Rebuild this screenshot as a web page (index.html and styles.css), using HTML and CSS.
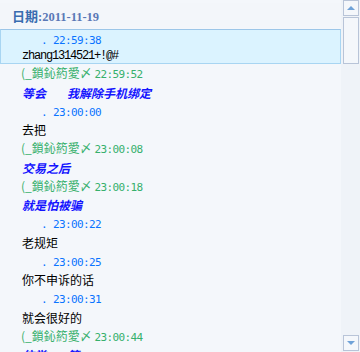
FILE: index.html
```html
<!DOCTYPE html>
<html lang="zh-CN">
<head>
<meta charset="utf-8">
<meta name="viewport" content="width=device-width, initial-scale=1.0">
<link rel="stylesheet" href="styles.css">
<title>聊天记录</title>
</head>
<body>
  <div class="window">
    <div class="log">
      <div class="date"><b>日期</b><span class="day">:2011-11-19</span></div>

      <div class="msg self selected">
        <div class="time"><span class="clock">. 22:59:38</span></div>
        <div class="text mono">zhang1314521+!@#</div>
      </div>

      <div class="msg">
        <div class="time peer">(_鎖鈊箹愛〆 <span class="clock">22:59:52</span></div>
        <div class="text loud">等会<span class="gap"></span>我解除手机绑定</div>
      </div>

      <div class="msg self">
        <div class="time"><span class="clock">. 23:00:00</span></div>
        <div class="text">去把</div>
      </div>

      <div class="msg">
        <div class="time peer">(_鎖鈊箹愛〆 <span class="clock">23:00:08</span></div>
        <div class="text loud">交易之后</div>
      </div>

      <div class="msg">
        <div class="time peer">(_鎖鈊箹愛〆 <span class="clock">23:00:18</span></div>
        <div class="text loud">就是怕被骗</div>
      </div>

      <div class="msg self">
        <div class="time"><span class="clock">. 23:00:22</span></div>
        <div class="text">老规矩</div>
      </div>

      <div class="msg self">
        <div class="time"><span class="clock">. 23:00:25</span></div>
        <div class="text">你不申诉的话</div>
      </div>

      <div class="msg self">
        <div class="time"><span class="clock">. 23:00:31</span></div>
        <div class="text">就会很好的</div>
      </div>

      <div class="msg">
        <div class="time peer">(_鎖鈊箹愛〆 <span class="clock">23:00:44</span></div>
        <div class="text loud">信誉<span class="gap"></span>第一</div>
      </div>
    </div>

    <div class="scrollbar">
      <div class="btn up"><span class="arrow"></span></div>
      <div class="thumb"></div>
      <div class="track"></div>
      <div class="btn down"><span class="arrow"></span></div>
    </div>
  </div>
</body>
</html>
```

FILE: styles.css
```css
body {
  margin: 0;
  background: #f9fafc;
  font-family: "Noto Sans CJK SC", sans-serif;
  font-size: 12px;
  overflow: hidden;
}
.window {
  display: flex;
  width: 360px;
  height: 352px;
  overflow: hidden;
}
.log {
  width: 341px;
  padding-top: 3px;
  background: #f4f7fb;
  overflow: hidden;
}
.date {
  height: 25px;
  line-height: 25px;
  padding-left: 12px;
  background: #f3f6fa;
  color: #3a6cb0;
  font-size: 13px;
}
.date b {
  font-weight: bold;
}
.day {
  font-family: "Liberation Serif", serif;
  font-weight: bold;
  font-size: 12.5px;
  color: #5a78b6;
}
.msg {
  height: 37.5px;
}
.msg .time {
  height: 18.5px;
  line-height: 18.5px;
  padding-left: 41px;
  color: #0a74ff;
  white-space: pre;
}
.msg .time.peer {
  padding-left: 21px;
  color: #36b06c;
}
.clock {
  font-family: "DejaVu Sans Mono", monospace;
  font-size: 11px;
  letter-spacing: -0.62px;
}
.msg .text {
  height: 19px;
  line-height: 19px;
  padding-left: 22px;
  color: #000;
  white-space: nowrap;
}
.msg .text.mono {
  font-family: "Liberation Mono", monospace;
  font-size: 12px;
  letter-spacing: -1.2px;
}
.loud {
  font-weight: bold;
  font-style: italic;
}
.msg .text.loud {
  color: #1414ff;
}
.gap {
  display: inline-block;
  width: 21px;
}
.selected {
  box-sizing: border-box;
  height: 35px;
  margin-top: 1px;
  background: #dbf3ff;
  border: 1px solid #a8d5f2;
  border-top-color: #9cc6e8;
}
.selected .time {
  height: 17px;
  line-height: 17px;
  padding-left: 40px;
}
.selected .text {
  padding-left: 21px;
}

.scrollbar {
  width: 19px;
  padding-left: 2px;
  box-sizing: border-box;
  display: flex;
  flex-direction: column;
  background: #eff3f8;
}
.btn, .thumb {
  box-sizing: border-box;
  width: 16px;
  border: 1px solid #b8c4d8;
  background: #f4f7fb;
}
.btn {
  height: 16px;
  display: flex;
  align-items: center;
  justify-content: center;
}
.up {
  margin-bottom: 1px;
}
.thumb {
  height: 47px;
}
.track {
  flex: 1;
}
.down {
  margin-bottom: 1px;
}
.arrow {
  width: 0;
  height: 0;
  border-left: 4px solid transparent;
  border-right: 4px solid transparent;
}
.up .arrow {
  border-bottom: 4px solid #6fa2d8;
}
.down .arrow {
  border-top: 4px solid #6fa2d8;
}
```
